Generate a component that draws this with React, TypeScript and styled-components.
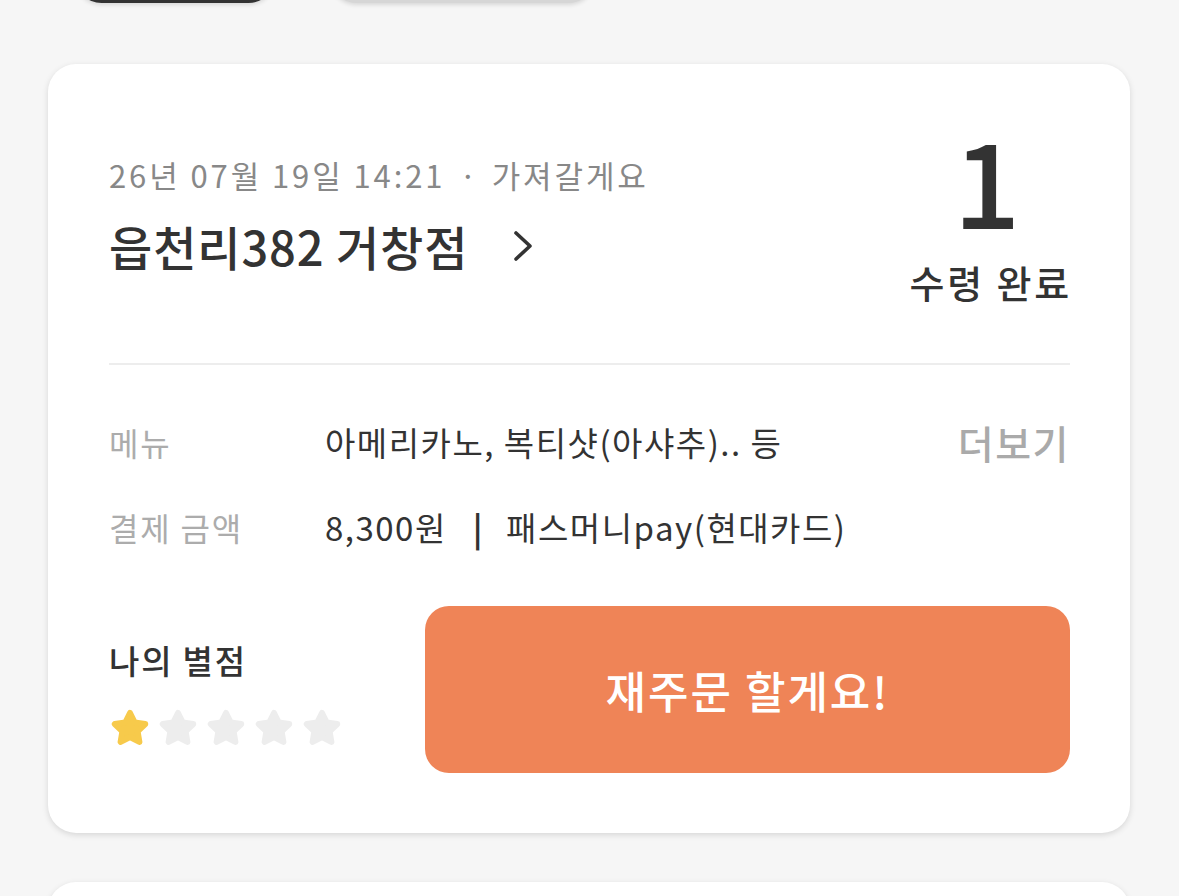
import styled, { createGlobalStyle } from 'styled-components';

const GlobalStyle = createGlobalStyle`
	body {
		margin: 0;
		background: #f6f6f6;
		font-family: 'Noto Sans CJK KR', 'Noto Sans', sans-serif;
		color: #333;
	}
`;

const Page = styled.div`
	height: 896px;
	overflow: hidden;
`;

const TabRow = styled.div`
	display: flex;
	gap: 55px;
	padding-left: 75px;
	margin: -50px 0 61px;
`;

const Tab = styled.div<{ $active?: boolean }>`
	height: 53px;
	width: ${(p) => (p.$active ? 200 : 265)}px;
	border-radius: 27px;
	background: ${(p) => (p.$active ? '#333' : '#d6d6d6')};
	box-shadow: 0 2px 4px rgba(0, 0, 0, 0.12);
`;

const Card = styled.section<{ $height?: number }>`
	margin: 0 49px 49px 48px;
	padding: 54px 60px 60px 61px;
	background: #fff;
	border-radius: 28px;
	box-shadow: 0 2px 6px rgba(0, 0, 0, 0.13);
	${(p) => (p.$height ? `height: ${p.$height}px;` : '')}
`;

const Header = styled.div`
	display: flex;
	justify-content: space-between;
	align-items: flex-start;
	padding-bottom: 59px;
	border-bottom: 2px solid #ededed;
`;

const OrderInfo = styled.div`
	margin-top: 37px;
`;

const OrderDate = styled.div`
	font-size: 31px;
	line-height: 40px;
	color: #888;
	letter-spacing: 2.9px;
`;

const Dot = styled.span`
	margin: 0 12px 0 14px;
`;

const StoreLink = styled.a`
	display: flex;
	align-items: center;
	gap: 44px;
	margin-top: 21px;
	font-size: 47px;
	line-height: 60px;
	font-weight: 500;
	letter-spacing: 0.9px;
	color: #333;
	text-decoration: none;
`;

const Status = styled.div`
	display: flex;
	flex-direction: column;
	align-items: center;
	margin-right: -2px;
`;

const StatusNumber = styled.div`
	font-size: 118px;
	line-height: 120px;
	font-weight: 500;
	color: #333;
	margin-right: 8px;
`;

const StatusLabel = styled.div`
	margin-top: 22px;
	font-size: 38px;
	line-height: 44px;
	font-weight: 500;
	letter-spacing: 2.8px;
`;

const InfoList = styled.div`
	display: flex;
	flex-direction: column;
	gap: 35px;
	padding-top: 52px;
`;

const InfoRow = styled.div`
	display: flex;
	align-items: center;
	height: 50px;
`;

const InfoLabel = styled.div`
	width: 216px;
	flex-shrink: 0;
	font-size: 32px;
	letter-spacing: 1.8px;
	color: #acacac;
`;

const InfoValue = styled.div`
	flex: 1;
	font-size: 33px;
	letter-spacing: 1.5px;
	color: #333;
`;

const Divider = styled.span`
	margin: 0 22px 0 26px;
	font-weight: 700;
`;

const MoreButton = styled.button`
	border: none;
	background: none;
	padding: 0;
	font-family: inherit;
	font-size: 39px;
	font-weight: 500;
	letter-spacing: 1.5px;
	color: #aaa;
`;

const Footer = styled.div`
	display: flex;
	justify-content: space-between;
	align-items: flex-start;
	margin-top: 54px;
`;

const Rating = styled.div`
	margin-top: 34px;
`;

const RatingTitle = styled.div`
	font-size: 33px;
	line-height: 40px;
	font-weight: 500;
	letter-spacing: 1.8px;
	color: #333;
`;

const Stars = styled.div`
	display: flex;
	gap: 8px;
	margin-top: 27px;
	margin-left: 1px;
`;

const ReorderButton = styled.button`
	width: 645px;
	height: 167px;
	border: none;
	border-radius: 24px;
	background: #ef8457;
	color: #fff;
	font-family: inherit;
	font-size: 44px;
	font-weight: 500;
	letter-spacing: 2px;
`;

const Star = ({ filled }: { filled: boolean }) => {
	const color = filled ? '#f7ca4b' : '#ededed';
	const pts: string[] = [];
	for (let i = 0; i < 10; i++) {
		const r = i % 2 === 0 ? 16 : 8;
		const a = (Math.PI / 5) * i - Math.PI / 2;
		pts.push(`${(20 + r * Math.cos(a)).toFixed(2)},${(22 + r * Math.sin(a)).toFixed(2)}`);
	}
	return (
		<svg width="40" height="38" viewBox="0 0 40 38">
			<polygon
				points={pts.join(' ')}
				fill={color}
				stroke={color}
				strokeWidth="6"
				strokeLinejoin="round"
			/>
		</svg>
	);
};

const Chevron = () => (
	<svg width="22" height="32" viewBox="0 0 22 32">
		<polyline
			points="4,3 18,16 4,29"
			fill="none"
			stroke="#333"
			strokeWidth="3.6"
			strokeLinecap="round"
			strokeLinejoin="round"
		/>
	</svg>
);

export default function App() {
	const rating = 1;
	return (
		<Page>
			<GlobalStyle />
			<TabRow>
				<Tab $active />
				<Tab />
			</TabRow>
			<Card>
				<Header>
					<OrderInfo>
						<OrderDate>
							26년 07월 19일 14:21<Dot>·</Dot>가져갈게요
						</OrderDate>
						<StoreLink href="#">
							읍천리382 거창점
							<Chevron />
						</StoreLink>
					</OrderInfo>
					<Status>
						<StatusNumber>1</StatusNumber>
						<StatusLabel>수령 완료</StatusLabel>
					</Status>
				</Header>
				<InfoList>
					<InfoRow>
						<InfoLabel>메뉴</InfoLabel>
						<InfoValue>아메리카노, 복티샷(아샤추).. 등</InfoValue>
						<MoreButton>더보기</MoreButton>
					</InfoRow>
					<InfoRow>
						<InfoLabel>결제 금액</InfoLabel>
						<InfoValue>
							8,300원<Divider>|</Divider>패스머니pay(현대카드)
						</InfoValue>
					</InfoRow>
				</InfoList>
				<Footer>
					<Rating>
						<RatingTitle>나의 별점</RatingTitle>
						<Stars>
							{[1, 2, 3, 4, 5].map((n) => (
								<Star key={n} filled={n <= rating} />
							))}
						</Stars>
					</Rating>
					<ReorderButton>재주문 할게요!</ReorderButton>
				</Footer>
			</Card>
			<Card $height={300} />
		</Page>
	);
}
